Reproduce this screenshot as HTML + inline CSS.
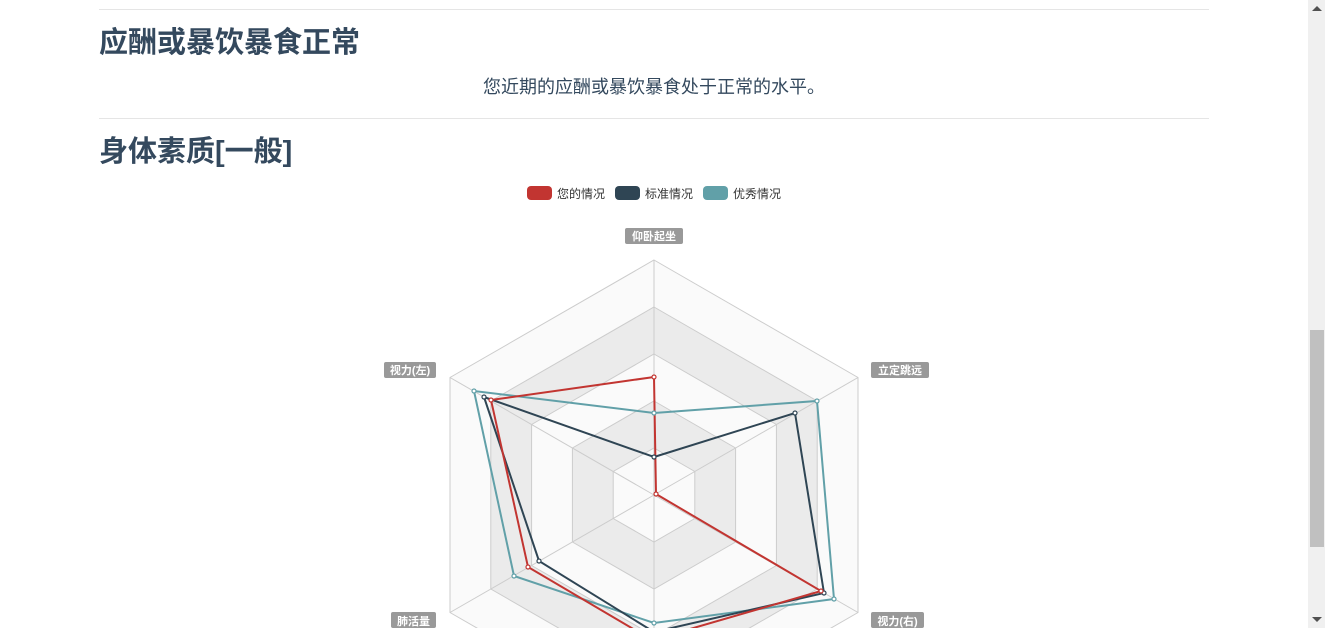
<!DOCTYPE html>
<html><head><meta charset="utf-8"><style>
html,body{margin:0;width:1325px;height:628px;overflow:hidden}
body{background:#fff;font-family:"Liberation Sans","Noto Sans CJK SC",sans-serif;position:relative}
.hr{position:absolute;left:99px;width:1110px;height:1px;background:#e5e5e5}
h2{position:absolute;left:99px;margin:0;font-size:29px;font-weight:bold;color:#34495e;line-height:34px}
p{position:absolute;left:99px;width:1110px;text-align:center;margin:0;font-size:18px;color:#34495e;line-height:22px}
.sb{position:absolute;left:1308px;top:0;width:17px;height:628px;background:#f0f0f0}
.th{position:absolute;left:1310px;top:330px;width:14px;height:217px;background:#c0c0c0}
</style></head><body>
<div class="hr" style="top:9px"></div>
<h2 style="top:26px">应酬或暴饮暴食正常</h2>
<p style="top:76px">您近期的应酬或暴饮暴食处于正常的水平。</p>
<div class="hr" style="top:118px"></div>
<h2 style="top:135px">身体素质[一般]</h2>
<svg style="position:absolute;left:0;top:0" width="1308" height="628" font-family="Liberation Sans,Noto Sans CJK SC,sans-serif">
<g font-size="12" fill="#333">
<rect x="527" y="186" width="25" height="14" rx="4" fill="#c23531"/><text x="557" y="198">您的情况</text>
<rect x="615" y="186" width="25" height="14" rx="4" fill="#2f4554"/><text x="645" y="198">标准情况</text>
<rect x="703" y="186" width="25" height="14" rx="4" fill="#61a0a8"/><text x="733" y="198">优秀情况</text>
</g>
<g stroke="#ccc" stroke-width="1">
<polygon points="654,260 858,377.5 858,612.5 654,730 450,612.5 450,377.5" fill="#fafafa"/>
<polygon points="654,307 817.2,401 817.2,589 654,683 490.8,589 490.8,401" fill="#ebebeb"/>
<polygon points="654,354 776.4,424.5 776.4,565.5 654,636 531.6,565.5 531.6,424.5" fill="#fafafa"/>
<polygon points="654,401 735.6,448 735.6,542 654,589 572.4,542 572.4,448" fill="#ebebeb"/>
<polygon points="654,448 694.8,471.5 694.8,518.5 654,542 613.2,518.5 613.2,471.5" fill="#fafafa"/>
<line x1="654" y1="495" x2="654" y2="260"/><line x1="654" y1="495" x2="858" y2="377.5"/><line x1="654" y1="495" x2="858" y2="612.5"/><line x1="654" y1="495" x2="654" y2="730"/><line x1="654" y1="495" x2="450" y2="612.5"/><line x1="654" y1="495" x2="450" y2="377.5"/>
</g>
<g fill="none" stroke-width="2">
<polygon stroke="#61a0a8" points="654,413 817,401 834,599 654,623 514,576 474,391"/>
<polygon stroke="#2f4554" points="654,457 795,413 824,593 654,632 539,561 484,397"/>
<polygon stroke="#c23531" points="654,377 656,494 821,591 652,640 528,567 491,400"/>
</g>
<g fill="#fff" stroke-width="1.2">
<g stroke="#61a0a8"><circle cx="654" cy="413" r="2"/><circle cx="817" cy="401" r="2"/><circle cx="834" cy="599" r="2"/><circle cx="654" cy="623" r="2"/><circle cx="514" cy="576" r="2"/><circle cx="474" cy="391" r="2"/></g>
<g stroke="#2f4554"><circle cx="654" cy="457" r="2"/><circle cx="795" cy="413" r="2"/><circle cx="824" cy="593" r="2"/><circle cx="539" cy="561" r="2"/><circle cx="484" cy="397" r="2"/></g>
<g stroke="#c23531"><circle cx="654" cy="377" r="2"/><circle cx="656" cy="494" r="2"/><circle cx="821" cy="591" r="2"/><circle cx="528" cy="567" r="2"/><circle cx="491" cy="400" r="2"/></g>
</g>
<g font-size="11" font-weight="bold" fill="#fff" text-anchor="middle">
<rect x="625" y="228" width="58" height="16" rx="2" fill="#999"/><text x="654" y="240">仰卧起坐</text>
<rect x="384" y="362" width="52" height="16" rx="2" fill="#999"/><text x="410" y="374">视力(左)</text>
<rect x="871" y="362" width="58" height="16" rx="2" fill="#999"/><text x="900" y="374">立定跳远</text>
<rect x="391" y="612" width="45" height="16" rx="2" fill="#999"/><text x="413.5" y="625">肺活量</text>
<rect x="871" y="612" width="53" height="16" rx="2" fill="#999"/><text x="897.5" y="625">视力(右)</text>
</g>
</svg>
<div class="sb"></div><div class="th"></div>
<div style="position:absolute;left:1312px;top:6px;width:0;height:0;border-left:5px solid transparent;border-right:5px solid transparent;border-bottom:5px solid #505050"></div>
<div style="position:absolute;left:1312px;top:617px;width:0;height:0;border-left:5px solid transparent;border-right:5px solid transparent;border-top:5px solid #505050"></div>
</body></html>
